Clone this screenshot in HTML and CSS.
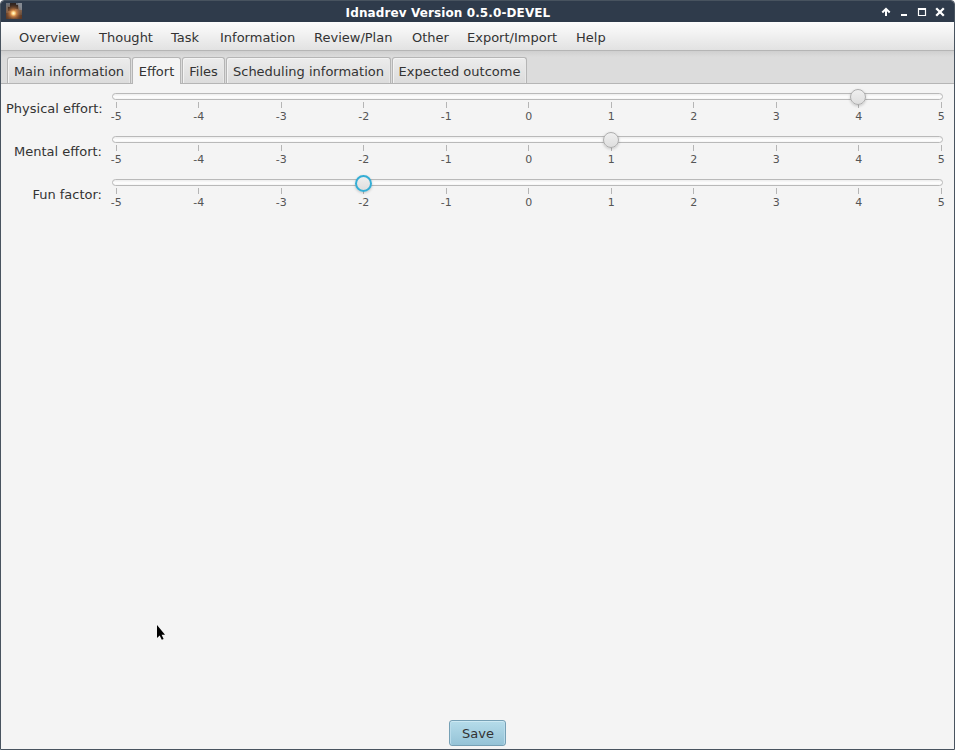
FILE: index.html
```
<!DOCTYPE html>
<html lang="en">
<head>
<meta charset="utf-8">
<title>Idnadrev Version 0.5.0-DEVEL</title>
<link rel="stylesheet" href="styles.css">
</head>
<body>
<div class="window">
  <header class="titlebar">
    <svg class="app-icon" width="16" height="16" viewBox="0 0 16 16">
      <defs>
        <radialGradient id="glow" cx=".47" cy=".64" r=".6"><stop offset="0" stop-color="#fffbe0"/><stop offset=".16" stop-color="#ffd684"/><stop offset=".32" stop-color="#d98a48" stop-opacity=".9"/><stop offset="1" stop-color="#5a3828" stop-opacity="0"/></radialGradient>
        <linearGradient id="sky" x2="0" y2="1"><stop offset="0" stop-color="#6a727c"/><stop offset=".5" stop-color="#806552"/><stop offset="1" stop-color="#3a2c26"/></linearGradient>
      </defs>
      <rect width="16" height="16" fill="url(#sky)"/>
      <path d="M4 0h6v2h2v4H9v2H2V4h2z" fill="#30241f"/>
      <path d="M12 0h4v7h-3z" fill="#858a92"/>
      <path d="M0 10h4v6H0zM10 12h6v4h-6z" fill="#5a3826"/>
      <rect width="16" height="16" fill="url(#glow)"/>
    </svg>
    <h1 class="title">Idnadrev Version 0.5.0-DEVEL</h1>
    <svg class="controls" width="66" height="12" viewBox="0 0 66 12" fill="none" stroke="#fff">
      <path d="M6 10V3M2.3 6.5L6 2.8l3.7 3.7" stroke-width="2"/>
      <path d="M21 9h6" stroke-width="2"/>
      <path d="M38 3h8M38.5 2v8M45.5 2v8M38 9.5h8" stroke-width="1.2"/><path d="M38 3h8" stroke-width="2"/>
      <path d="M56.2 2.2l7.6 7.6M63.8 2.2l-7.6 7.6" stroke-width="2.3"/>
    </svg>
  </header>
  <nav class="menubar">
    <span>Overview</span><span>Thought</span><span>Task</span><span>Information</span><span>Review/Plan</span><span>Other</span><span>Export/Import</span><span>Help</span>
  </nav>
  <div class="tabs">
    <div class="tab main-info">Main information</div>
    <div class="tab effort active">Effort</div>
    <div class="tab files">Files</div>
    <div class="tab scheduling">Scheduling information</div>
    <div class="tab outcome">Expected outcome</div>
  </div>
  <main class="content">
    <div class="row">
      <label>Physical effort:</label>
      <div class="slider"><div class="track"><i class="thumb" style="left:746px"></i></div>
        <div class="ticks"><b>-5</b><b>-4</b><b>-3</b><b>-2</b><b>-1</b><b>0</b><b>1</b><b>2</b><b>3</b><b>4</b><b>5</b></div></div>
    </div>
    <div class="row">
      <label>Mental effort:</label>
      <div class="slider"><div class="track"><i class="thumb" style="left:499px"></i></div>
        <div class="ticks"><b>-5</b><b>-4</b><b>-3</b><b>-2</b><b>-1</b><b>0</b><b>1</b><b>2</b><b>3</b><b>4</b><b>5</b></div></div>
    </div>
    <div class="row">
      <label>Fun factor:</label>
      <div class="slider"><div class="track"><i class="thumb focused" style="left:251px"></i></div>
        <div class="ticks"><b>-5</b><b>-4</b><b>-3</b><b>-2</b><b>-1</b><b>0</b><b>1</b><b>2</b><b>3</b><b>4</b><b>5</b></div></div>
    </div>
  </main>
  <footer class="footer"><button class="save">Save</button></footer>
  <svg class="cursor" width="10" height="16" viewBox="0 0 10 16"><path d="M1 0v13l2.7-2.6 2.1 4.4 1.8-.9-2-4.1H9z" fill="#000"/></svg>
</div>
</body>
</html>
```
FILE: styles.css
```
* { box-sizing: border-box; }
body {
  margin: 0;
  background: #fff;
  font: 13px/16px "DejaVu Sans", sans-serif;
  color: #333;
}
.window {
  position: relative;
  display: flex;
  flex-direction: column;
  width: 955px;
  height: 750px;
  border: 1px solid #48535f;
  border-radius: 4px 4px 0 0;
  background: #f4f4f4;
  overflow: hidden;
}
.titlebar {
  display: flex;
  align-items: center;
  height: 21px;
  padding: 0 8px 0 5px;
  background: #2f3b4b;
  color: #fff;
}
.app-icon { flex: none; margin-bottom: 1px; }
.title {
  flex: 1;
  margin: 2px 0 0 -6px;
  font-size: 12px;
  font-weight: bold;
  letter-spacing: .11px;
  line-height: 16px;
  text-align: center;
}
.controls { flex: none; margin-top: 1px; }
.menubar {
  display: grid;
  grid-template-columns: 80px 72px 49px 94px 98px 55px 109px auto;
  height: 29px;
  padding: 8px 18px 0;
  border-bottom: 1px solid #b5b5b5;
  background: linear-gradient(#fdfdfd, #e2e2e2);
}
.tabs {
  display: flex;
  align-items: flex-end;
  gap: 1px;
  height: 33px;
  padding-left: 6px;
  border-bottom: 1px solid #b5b5b5;
  background: linear-gradient(#cfcfcf, #dcdcdc 6px);
}
.tab {
  height: 26px;
  padding-top: 6px;
  border: 1px solid #b5b5b5;
  border-bottom: 0;
  border-radius: 3px 3px 0 0;
  background: linear-gradient(#ececec, #dcdcdc);
  box-shadow: inset 1px 1px #f3f3f3, inset -1px 0 #e8e8e8;
  text-align: center;
  white-space: nowrap;
}
.main-info { width: 124px; }
.effort { width: 49px; }
.files { width: 43px; }
.scheduling { width: 165px; }
.outcome { width: 135px; }
.tab.active {
  height: 27px;
  margin-bottom: -1px;
  background: #f4f4f4;
  box-shadow: none;
}
.content { flex: 1; padding: 9px 11px 0 5px; }
.row { display: flex; height: 43px; }
label {
  width: 96px;
  margin-right: 10px;
  padding-top: 8px;
  text-align: right;
  white-space: nowrap;
}
.slider { width: 831px; }
.track {
  position: relative;
  height: 7px;
  border: 1px solid #b9b9b9;
  border-radius: 4px;
  background: linear-gradient(#ededed, #fff 60%, #f4f4f4);
}
.thumb {
  position: absolute;
  top: 3px;
  z-index: 1;
  width: 16px;
  height: 16px;
  margin: -8px 0 0 -9px;
  border: 1px solid #adadad;
  border-radius: 50%;
  background: linear-gradient(#efefef, #dedede);
  box-shadow: 0 1px 3px #0003;
}
.thumb.focused { width: 17px; height: 17px; border: 2px solid #35aed5; }
.ticks {
  display: flex;
  justify-content: space-between;
  padding: 2px 1.7px 0 4.3px;
}
.ticks b {
  display: flex;
  flex-direction: column;
  align-items: center;
  width: 0;
  font-size: 11px;
  font-weight: normal;
  line-height: 14px;
  color: #555;
}
.ticks b::before {
  content: "";
  flex: none;
  width: 1px;
  height: 6px;
  margin-bottom: 2px;
  background: #b5b5b5;
}
.footer { display: flex; justify-content: center; height: 29px; }
.save {
  width: 57px;
  height: 26px;
  padding: 1px 0 0 1px;
  border: 1px solid #76a0b5;
  border-radius: 3px;
  background: linear-gradient(#b5dcea, #95c3d7);
  box-shadow: inset 0 1px #cde9f3, inset 1px 0 #b9dceb, inset -1px 0 #b9dceb;
  font: inherit;
  color: #333;
}
.cursor { position: absolute; left: 155px; top: 624px; }
```
